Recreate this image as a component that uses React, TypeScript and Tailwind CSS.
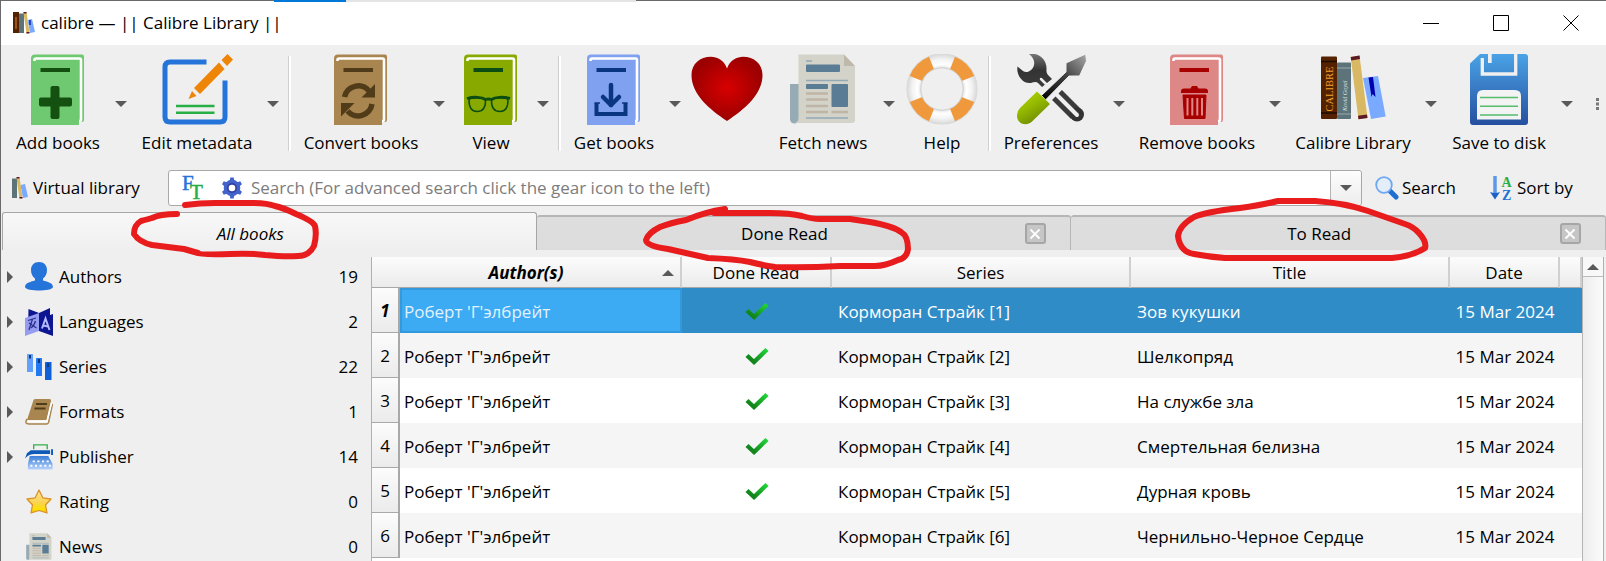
import React from "react";

type IconProps = { className?: string };

function Book({ cover, ink, children }: { cover: string; ink: string; children: React.ReactNode }) {
  return (
    <svg viewBox="0 0 54 72" className="h-[72px] w-[54px]" aria-hidden="true">
      <path d="M4 0.5H51a2 2 0 0 1 2 2V66a2 2 0 0 1-2 2H48V71H0V4.500a4 4 0 0 1 4-4Z" fill={cover} />
      <path d="M3.500 7.500V6q0-1.500 1.500-1.500H48.500q1.500 0 1.500 1.500V66q0 1-2 1" fill="none" stroke="#fff" strokeWidth="2.600" />
      <path d="M2 7H45.500a2 2 0 0 1 2 2V71H2Z" fill={cover} />
      <rect x="9.500" y="14" width="29.500" height="4" fill={ink} />
      {children}
    </svg>
  );
}

const AddIcon = () => (
  <Book cover="#6fc971" ink="#14500f">
    <path d="M19.500 34a2 2 0 0 1 2-2h5a2 2 0 0 1 2 2v9.500H39a2 2 0 0 1 2 2v5a2 2 0 0 1-2 2H28.500V63a2 2 0 0 1-2 2h-5a2 2 0 0 1-2-2V52.500H10a2 2 0 0 1-2-2v-5a2 2 0 0 1 2-2h9.500Z" fill="#14500f" />
  </Book>
);

const ConvertIcon = () => (
  <Book cover="#a9854f" ink="#503c18">
    <path d="M10.500 43A14 14 0 0 1 35 37" fill="none" stroke="#503c18" strokeWidth="5.500" />
    <path d="M41 30V43.500H27.500Z" fill="#503c18" />
    <path d="M38 50A14 14 0 0 1 13.500 57" fill="none" stroke="#503c18" strokeWidth="5.500" />
    <path d="M7 62.500V49H20.500Z" fill="#503c18" />
  </Book>
);

const ViewIcon = () => (
  <Book cover="#88aa00" ink="#0b4d12">
    <g fill="none" stroke="#0b4d12" strokeWidth="1.500">
      <path d="M5 46C5 43 21 43 21.500 47C21.500 53 19 57.500 13 57.500C6.500 57.500 5 52 5 46Z" />
      <path d="M44 46C44 43 28 43 27.500 47C27.500 53 30 57.500 36 57.500C42.500 57.500 44 52 44 46Z" />
      <path d="M3 44.500C10 42.500 18 43 21.500 45.500Q24.500 44.500 27.500 45.500C31 43 39 42.500 46 44.500" strokeWidth="2.800" />
    </g>
  </Book>
);

const GetIcon = () => (
  <Book cover="#80a0f0" ink="#0a3580">
    <g fill="none" stroke="#0a3580" strokeWidth="4.500">
      <path d="M24 31V51" strokeLinecap="round" />
      <path d="M16 43L24 51L32 43" strokeLinecap="round" strokeLinejoin="round" />
      <path d="M9.500 49V60H38.500V49" strokeWidth="4" />
      <path d="M7.500 49H13M35 49H40.500" strokeWidth="1.500" />
    </g>
  </Book>
);

const RemoveIcon = () => (
  <Book cover="#de8787" ink="#a80000">
    <path d="M11 39V37.500q0-3 3-3H20.500l1.500-2.500h5l1.500 2.500H35q3 0 3 3V39Z" fill="#a80000" />
    <path d="M13 41H36L35 64.500H14.500Z" fill="#a80000" stroke="#a80000" strokeWidth="1" strokeLinejoin="round" />
    <path d="M17.500 44V61.500M22.300 44V61.500M27.300 44V61.500M32 44V61.500" stroke="#de8787" strokeWidth="2" />
  </Book>
);

const EditIcon = () => (
  <svg viewBox="0 0 72 72" className="size-[72px]" aria-hidden="true">
    <path d="M45.500 8H9q-5 0-5 5V63q0 5 5 5H59q5 0 5-5V26.500" fill="none" stroke="#2574da" strokeWidth="5" />
    <path d="M15 52H53.500M15 58.700H53.500" stroke="#27ae44" strokeWidth="2.400" />
    <path d="M33 34L58 8.500L63.500 15L39 40ZM60.500 6L66.500 0L72 5.500L66 12ZM31 37L35.500 42L27.500 45Z" fill="#ee8506" />
  </svg>
);

const HeartIcon = () => (
  <svg viewBox="0 0 72 72" className="size-[72px]" aria-hidden="true">
    <defs>
      <radialGradient id="heart" cx="50%" cy="48%" r="50%">
        <stop offset="0" stopColor="#d80000" />
        <stop offset="1" stopColor="#9c0000" />
      </radialGradient>
    </defs>
    <path d="M36 14.500C39 6 46 2.800 52 2.800C63 2.800 71.500 10 71.500 21C71.500 40 54 55 36 67C18 55 .5 40 .5 21C.5 10 9 2.800 20 2.800C26 2.800 33 6 36 14.500Z" fill="url(#heart)" />
  </svg>
);

const NewsIcon = ({ className = "size-[72px]" }: IconProps) => (
  <svg viewBox="0 0 72 72" className={className} aria-hidden="true">
    <path d="M3 30H12V65a4.500 4.500 0 0 1-9 0Z" fill="#97abb5" />
    <path d="M11.500 .5H57L68 12V66q0 3-3 3H8q3.500-1 3.500-5Z" fill="#d3d3c9" />
    <path d="M57 .5L68 12H57Z" fill="#bfb9ac" />
    <g fill="#5a7c94">
      <rect x="19" y="10.500" width="34" height="7.500" rx="1" />
      <rect x="19" y="30" width="22" height="5" rx="1" />
      <rect x="44.500" y="30" width="16.500" height="23" rx="1" />
    </g>
    <path d="M19 7H25M19 26.500H61M19 64H61" stroke="#93a9b6" strokeWidth="1.600" />
    <path d="M19 39.500H41M19 45.500H41M19 52H41M19 58H41M44.500 58H61" stroke="#bfb5a6" strokeWidth="2.400" />
  </svg>
);

const HelpIcon = () => (
  <svg viewBox="0 0 72 72" className="size-[72px]" aria-hidden="true">
    <defs>
      <radialGradient id="ring" gradientUnits="userSpaceOnUse" cx="36" cy="35" r="36">
        <stop offset=".58" stopColor="#e2e2e2" />
        <stop offset=".68" stopColor="#fff" />
        <stop offset=".82" stopColor="#f4f4f4" />
        <stop offset="1" stopColor="#d4d4d4" />
      </radialGradient>
    </defs>
    <circle cx="36" cy="35" r="28.300" fill="none" stroke="url(#ring)" strokeWidth="14.500" />
    <circle cx="36" cy="35" r="28" fill="none" stroke="#f0993c" strokeWidth="13.500" pathLength="360" strokeDasharray="46 44" transform="rotate(22 36 35)" />
    <circle cx="36" cy="35" r="21.200" fill="none" stroke="#cfcfcf" strokeWidth="1" />
  </svg>
);

const ToolsIcon = () => (
  <svg viewBox="0 0 72 72" className="size-[72px]" aria-hidden="true">
    <defs>
      <linearGradient id="steel" x1="0" y1="0" x2="0" y2="1">
        <stop offset="0" stopColor="#777" />
        <stop offset=".5" stopColor="#333" />
        <stop offset="1" stopColor="#3c3c3c" />
      </linearGradient>
      <linearGradient id="blade" x1="1" y1="0" x2="0" y2="1">
        <stop offset="0" stopColor="#aaa" />
        <stop offset=".45" stopColor="#444" />
        <stop offset="1" stopColor="#000" />
      </linearGradient>
      <linearGradient id="grip" x1="0" y1="0" x2=".6" y2="1">
        <stop offset="0" stopColor="#b5dc00" />
        <stop offset=".5" stopColor="#95ba00" />
        <stop offset="1" stopColor="#6c8600" />
      </linearGradient>
    </defs>
    <path d="M14 0C25-2 32 7 31.500 15Q31 19 33 21L37 25L27 33L23 29Q21 27 16 29C7 30 1 20 2.500 12.500L8 17C12 20 18 16 19 11C20 7 18 3 14 0Z" fill="url(#steel)" />
    <path d="M34 33L26 25" stroke="#efefef" strokeWidth="2.500" strokeLinecap="round" />
    <path d="M42 41L61 60" stroke="#3b3b3b" strokeWidth="14" />
    <circle cx="62" cy="60.500" r="7" fill="#333" />
    <path d="M38 37L62 61" stroke="#efefef" strokeWidth="4" strokeLinecap="round" />
    <path d="M70.700 0L71.500 7L64.500 22H54L30.500 46L26.500 41.500L51 18V9Z" fill="url(#blade)" stroke="#efefef" strokeWidth="1" />
    <path d="M22 37.500L35 50L17 67.500C11 73 1.500 69.500 2 61Q2 57 5 54Z" fill="url(#grip)" />
  </svg>
);

const LibraryIcon = () => (
  <svg viewBox="0 0 72 72" className="size-[72px]" aria-hidden="true">
    <rect x="4" y="2.500" width="16" height="62.500" rx="1" fill="#542200" />
    <path d="M4 7.500H20M4 59H20" stroke="#1e0c00" strokeWidth="1.500" />
    <text x="15.500" y="57.500" transform="rotate(-90 15.500 57.500)" fill="#f0a030" fontSize="10.500" fontFamily="Liberation Serif, serif">CALIBRE</text>
    <rect x="20" y="8.500" width="14" height="56.500" rx="1" fill="#5c7479" />
    <path d="M20 14H34M20 60H34" stroke="#a8b8bb" strokeWidth=".8" />
    <text x="29.500" y="57" transform="rotate(-90 29.500 57)" fill="#dfe7e8" fontSize="6" fontStyle="italic" fontFamily="Liberation Serif, serif">Kovid Goyal</text>
    <path d="M46 24L61 22L68.700 62.500L54 65Z" fill="#79aaff" />
    <path d="M51.500 23.500L56 23L58.500 43L55.500 40L54.500 43Z" fill="#0000b0" />
    <path d="M33.700 3L42.500 1.500L50.500 64L41.500 65.200Z" fill="#d8b863" />
    <path d="M33.700 3L42.500 1.500L43 5L34.200 6.500ZM41 61.700L50 60.500L50.500 64L41.500 65.200Z" fill="#5c1826" />
  </svg>
);

const SaveIcon = () => (
  <svg viewBox="0 0 72 72" className="size-[72px]" aria-hidden="true">
    <defs>
      <linearGradient id="disk" x1="0" y1="0" x2="0" y2="1">
        <stop offset="0" stopColor="#4aa3e6" />
        <stop offset="1" stopColor="#254f9e" />
      </linearGradient>
    </defs>
    <path d="M17 0H62q3 0 3 3V68q0 3-3 3H10q-3 0-3-3V9.500Z" fill="url(#disk)" />
    <path d="M19.300 4V20H52.700V0" fill="none" stroke="#f0f0f0" strokeWidth="3.300" />
    <path d="M25 0H28.700V9H25Z" fill="#f0f0f0" />
    <path d="M14 65.500V42q0-6 6-6H52q6 0 6 6V65.500Z" fill="#f3f3f3" />
    <path d="M17 43.500H55M17 52.200H55M17 61H55" stroke="#55bd6c" strokeWidth="1.600" />
  </svg>
);

const SmallBooks = ({ className, full = false }: IconProps & { full?: boolean }) => (
  <svg viewBox={full ? "0 0 22 22" : "6 0 16 22"} className={className} aria-hidden="true">
    {full && <rect x="0" y="0" width="6" height="21" fill="#542200" />}
    {full && <path d="M3 5V17" stroke="#b06820" strokeWidth="1.500" />}
    <rect x="6" y="1.500" width="5" height="19.500" fill="#5c7479" />
    <path d="M14.500 8L19 7L22 20L17 21Z" fill="#79aaff" />
    {full && <path d="M17 8V13" stroke="#1020b0" strokeWidth="1.500" />}
    <path d="M10.500 .5L13.500 0L16.500 21L13.500 21.500Z" fill="#d8b863" />
    <path d="M10.500 0h3v1.500h-3ZM13.500 20h3v1.500h-3Z" fill="#5c1826" />
  </svg>
);

const Triangle = ({ dir }: { dir: "down" | "up" | "right" }) => (
  <svg viewBox="0 0 12 12" className="size-3 shrink-0" fill="#595959" aria-hidden="true">
    {dir === "down" && <path d="M0 3H12L6 9Z" />}
    {dir === "up" && <path d="M0 9H12L6 3Z" />}
    {dir === "right" && <path d="M3 0V12L9 6Z" />}
  </svg>
);

const tools: { label: string; icon: React.ReactNode; width: string; menu: boolean; sep?: boolean }[] = [
  { label: "Add books", icon: <AddIcon />, width: "w-[104px]", menu: true },
  { label: "Edit metadata", icon: <EditIcon />, width: "w-[130px]", menu: true, sep: true },
  { label: "Convert books", icon: <ConvertIcon />, width: "w-[134px]", menu: true },
  { label: "View", icon: <ViewIcon />, width: "w-[82px]", menu: true, sep: true },
  { label: "Get books", icon: <GetIcon />, width: "w-[100px]", menu: true },
  { label: "", icon: <HeartIcon />, width: "w-[82px]", menu: false },
  { label: "Fetch news", icon: <NewsIcon />, width: "w-[110px]", menu: true },
  { label: "Help", icon: <HelpIcon />, width: "w-[84px]", menu: false, sep: true },
  { label: "Preferences", icon: <ToolsIcon />, width: "w-[114px]", menu: true },
  { label: "Remove books", icon: <RemoveIcon />, width: "w-[134px]", menu: true },
  { label: "Calibre Library", icon: <LibraryIcon />, width: "w-[134px]", menu: true },
  { label: "Save to disk", icon: <SaveIcon />, width: "w-[114px]", menu: true },
];

const categories: { label: string; count: number; open: boolean; icon: React.ReactNode }[] = [
  {
    label: "Authors", count: 19, open: true,
    icon: <svg viewBox="0 0 28 29" className="h-[29px] w-7" aria-hidden="true"><path d="M14 0C19 0 22 3.500 22 8C22 12 20.500 14.500 18 16.500V18.500C23 20 28 21 28 25C28 27.500 20 28.500 14 28.500C8 28.500 0 27.500 0 25C0 21 5 20 10 18.500V16.500C7.500 14.500 6 12 6 8C6 3.500 9 0 14 0Z" fill="#2574da" /></svg>,
  },
  {
    label: "Languages", count: 2, open: true,
    icon: (
      <svg viewBox="0 0 28 28" className="size-7" aria-hidden="true">
        <path d="M3.500 1L14 5L25 0V7L28 6V28L14 23L3 20Z" fill="#0d1690" />
        <path d="M0 10L14 5V23L0 28Z" fill="#969cf0" />
        <path d="M3 12.500L11 10M7.500 11L4 22M4 15L11.500 20M10.500 13Q9 18 6 20" stroke="#2a3090" strokeWidth="1.300" fill="none" />
        <path d="M17 20.500L20.500 10.500L24.500 22M18.200 17.500L23 18.500" stroke="#b4b8ff" strokeWidth="2" fill="none" />
      </svg>
    ),
  },
  {
    label: "Series", count: 22, open: true,
    icon: (
      <svg viewBox="0 0 28 28" className="size-7" aria-hidden="true">
        <rect x="2" y="1" width="6" height="18" rx=".5" fill="#63a0fa" />
        <rect x="11" y="5" width="6" height="18" rx=".5" fill="#2277f3" />
        <rect x="20" y="9" width="6.500" height="18" rx=".5" fill="#0f5fd7" />
        <path d="M5 2V5.500M14 6V10M23 10.500V14" stroke="#123a78" strokeWidth="2" />
      </svg>
    ),
  },
  {
    label: "Formats", count: 1, open: true,
    icon: (
      <svg viewBox="0 0 28 28" className="size-7" aria-hidden="true">
        <path d="M8.500 2Q9 1 10.500 1H24Q26.500 1 26 3L21.500 22H2Z" fill="#a9854f" />
        <path d="M2 21Q-1 26 4 26H21.500Q23 26 23.500 24.500L27.500 6" fill="none" stroke="#a9854f" strokeWidth="1.500" />
        <path d="M3 23.500H22L26.500 5" fill="none" stroke="#fff" strokeWidth="1.500" />
        <path d="M11 6H22M9.500 10.500H20.500" stroke="#503c18" strokeWidth="2.200" />
      </svg>
    ),
  },
  {
    label: "Publisher", count: 14, open: true,
    icon: (
      <svg viewBox="0 0 29 28" className="h-7 w-[29px]" aria-hidden="true">
        <defs><linearGradient id="keys" x1="0" y1="0" x2="0" y2="1"><stop offset="0" stopColor="#3c7ed8" /><stop offset="1" stopColor="#b6d4fc" /></linearGradient></defs>
        <path d="M9 6V1.500H23V6" fill="none" stroke="#34b14a" strokeWidth="1.400" />
        <path d="M6 7H26V11H10Q4 11 0 15.500L2 10ZM27 6H29V12H27Z" fill="#0f5ab8" />
        <path d="M5 13H24L28.500 21V27H3V21Z" fill="url(#keys)" />
        <path d="M8 18.500H26M5.500 23H28" stroke="#fff" strokeWidth="2" strokeDasharray="2.200 2.600" />
      </svg>
    ),
  },
  {
    label: "Rating", count: 0, open: false,
    icon: (
      <svg viewBox="0 0 28 28" className="size-7" aria-hidden="true">
        <defs><linearGradient id="star" x1="0" y1="0" x2="0" y2="1"><stop offset="0" stopColor="#fbe39a" /><stop offset=".55" stopColor="#fbd350" /><stop offset=".85" stopColor="#fbe100" /><stop offset="1" stopColor="#f3ab20" /></linearGradient></defs>
        <path d="M14 2L17.800 9.800L26 11L20.500 17L22 25L14 22.500L6 25L7.500 17L2 11L10.200 9.800Z" fill="url(#star)" stroke="#d9922c" strokeWidth="1.300" strokeLinejoin="round" />
      </svg>
    ),
  },
  { label: "News", count: 0, open: false, icon: <NewsIcon className="size-7" /> },
];

const books = [
  { title: "Зов кукушки", read: true },
  { title: "Шелкопряд", read: true },
  { title: "На службе зла", read: true },
  { title: "Смертельная белизна", read: true },
  { title: "Дурная кровь", read: true },
  { title: "Чернильно-Черное Сердце", read: false },
];

const Check = () => (
  <svg viewBox="0 0 24 20" className="mx-auto h-5 w-6" role="img" aria-label="Yes">
    <defs><linearGradient id="tick" x1="0" y1="1" x2="1" y2="0"><stop offset=".2" stopColor="#12851c" /><stop offset="1" stopColor="#20d838" /></linearGradient></defs>
    <path d="M2 8.500L9 15L22 2.500" fill="none" stroke="url(#tick)" strokeWidth="4.400" />
  </svg>
);

function TabClose({ name }: { name: string }) {
  return (
    <button aria-label={`Close ${name}`} className="flex size-[21px] items-center justify-center rounded-[3px] border-2 border-[#a6a6a6] bg-[#c6c6c6]">
      <svg viewBox="0 0 12 12" className="size-3" aria-hidden="true"><path d="M1.500 1.500L10.500 10.500M10.500 1.500L1.500 10.500" stroke="#fff" strokeWidth="1.800" /></svg>
    </button>
  );
}

const headCell = "h-[31px] border-r-2 border-b border-r-[#d0d0d0] border-b-[#a8a8a8] bg-linear-to-b from-[#fcfcfc] to-[#ebebeb] p-0 pt-0.5 text-center font-normal";

export default function App() {
  return (
    <div className="relative flex h-screen flex-col overflow-hidden border-l border-[#6b696b] bg-[#efefef] font-['Open_Sans','Noto_Sans',sans-serif] text-[17px] leading-6 text-black">
      <header className="flex h-[45px] shrink-0 items-center border-t border-[#6b696b] bg-white pl-3">
        <SmallBooks full className="size-[22px]" />
        <h1 className="ml-1.5 flex-1">calibre — || Calibre Library ||</h1>
        <button aria-label="Minimize" className="flex h-full w-[70px] items-center justify-center">
          <svg viewBox="0 0 16 16" className="size-4" aria-hidden="true"><path d="M0 8.500H16" stroke="#000" /></svg>
        </button>
        <button aria-label="Maximize" className="flex h-full w-[70px] items-center justify-center">
          <svg viewBox="0 0 16 16" className="size-4" aria-hidden="true"><path d="M.5 .5H15.500V15.500H.5Z" fill="none" stroke="#000" /></svg>
        </button>
        <button aria-label="Close" className="flex h-full w-[70px] items-center justify-center">
          <svg viewBox="0 0 16 16" className="size-4" aria-hidden="true"><path d="M.5 .5L15.500 15.500M15.500 .5L.5 15.500" stroke="#000" /></svg>
        </button>
      </header>

      <div role="toolbar" aria-label="Main" className="flex h-[120px] shrink-0 items-start pt-[9px] pl-[5px]">
        {tools.map((t, i) => (
          <React.Fragment key={i}>
            <button aria-label={t.label || "Donate"} className={`flex shrink-0 flex-col items-center whitespace-nowrap ${t.width}`}>
              {t.icon}
              <span className="mt-[5px]">{t.label}</span>
            </button>
            {t.menu && (
              <button aria-label={`${t.label} menu`} className="flex h-[100px] w-[22px] shrink-0 items-center justify-center">
                <Triangle dir="down" />
              </button>
            )}
            {t.sep && (
              <div className="flex w-2.5 shrink-0 justify-center pt-0.5">
                <div className="h-[95px] w-[3px] border-l border-[#cfcfcf] bg-white" />
              </div>
            )}
          </React.Fragment>
        ))}
        <button aria-label="More tools" className="ml-auto flex h-[100px] w-[18px] items-center justify-center">
          <svg viewBox="0 0 3 12" className="h-3 w-[3px]" fill="#777" aria-hidden="true"><path d="M0 0h3v3H0ZM0 4.500h3v3H0ZM0 9h3v3H0Z" /></svg>
        </button>
      </div>

      <div className="flex h-[47px] shrink-0 items-center pb-0.5">
        <button className="flex w-[167px] shrink-0 items-center pl-[11px]">
          <SmallBooks className="h-[22px] w-4" />
          <span className="ml-[5px]">Virtual library</span>
        </button>
        <div className="flex h-9 min-w-0 flex-1 items-center rounded-[3px] border border-[#a8a8a8] bg-white">
          <button aria-label="Full text search" className="ml-3 shrink-0">
            <svg viewBox="0 0 24 26" className="h-[26px] w-6 overflow-visible" fontFamily="Liberation Serif, serif" fontSize="21" aria-hidden="true">
              <text x="1" y="15" fill="#2574da" stroke="#2574da" strokeWidth=".5">F</text>
              <text x="9" y="23.500" fill="#27ae44" stroke="#27ae44" strokeWidth=".5">T</text>
            </svg>
          </button>
          <button aria-label="Advanced search" className="ml-4 shrink-0">
            <svg viewBox="0 0 22 22" className="size-[22px]" aria-hidden="true">
              <g fill="#4263cc">
                <circle cx="11" cy="11" r="8.300" />
                <path id="cog" d="M8.500 5L9.300 .5H12.700L13.500 5V17L12.700 21.500H9.300L8.500 17Z" />
                <use href="#cog" transform="rotate(60 11 11)" />
                <use href="#cog" transform="rotate(120 11 11)" />
              </g>
              <circle cx="11" cy="11" r="5" fill="#343f9f" />
              <circle cx="11" cy="11" r="3.300" fill="#fff" />
            </svg>
          </button>
          <input aria-label="Search books" placeholder="Search (For advanced search click the gear icon to the left)" className="ml-2 h-full min-w-0 flex-1 bg-transparent outline-none placeholder:text-[#7c7c7c]" />
          <button aria-label="Search history" className="flex h-full w-[31px] items-center justify-center rounded-r-[3px] border-l border-[#b4b4b4] bg-linear-to-b from-[#fdfdfd] to-[#ededed]">
            <Triangle dir="down" />
          </button>
        </div>
        <button className="ml-[13px] flex w-[115px] shrink-0 items-center">
          <svg viewBox="0 0 24 24" className="size-6" aria-hidden="true">
            <path d="M14.500 14.500L21 21" stroke="#2070d4" strokeWidth="5" strokeLinecap="round" />
            <circle cx="9" cy="9" r="7.800" fill="#e4eefb" stroke="#70a8f0" strokeWidth="1.800" />
          </svg>
          <span className="ml-[3px]">Search</span>
        </button>
        <button className="flex w-[116px] shrink-0 items-center">
          <svg viewBox="0 0 22 26" className="h-[26px] w-[22px] overflow-visible" fontFamily="Liberation Serif, serif" fontSize="14" fontWeight="bold" aria-hidden="true">
            <path d="M5 1V20" stroke="#5a98ea" strokeWidth="3.500" />
            <path d="M0 17Q5 19 10 17L5 24.500Z" fill="#1a62c8" />
            <text x="11.500" y="11.500" fill="#27ae44">A</text>
            <text x="12" y="24.500" fill="#2070d4">Z</text>
          </svg>
          <span className="ml-[5px]">Sort by</span>
        </button>
      </div>

      <div role="tablist" className="grid h-[38px] shrink-0 grid-cols-3 items-end pl-px">
        <button role="tab" aria-selected="true" className="h-full rounded-t-[3px] border border-b-0 border-[#a6a6a6] bg-linear-to-b from-[#f8f8f8] to-[#efefef] pt-1 pr-[38px] italic">All books</button>
        {["Done Read", "To Read"].map((name) => (
          <div key={name} className="flex h-[35px] items-center rounded-t-[3px] border-t-2 border-r border-[#b6b6b6] bg-linear-to-b from-[#dedede] to-[#dcdcdc]">
            <button role="tab" aria-selected="false" className="ml-8 h-full flex-1">{name}</button>
            <div className="flex w-[70px] justify-center"><TabClose name={name} /></div>
          </div>
        ))}
      </div>

      <main className="flex min-h-0 flex-1">
        <nav aria-label="Categories" className="w-[370px] shrink-0 pt-1">
          <ul>
            {categories.map((c) => (
              <li key={c.label}>
                <a href="#" className="flex h-[45px] items-center pr-[13px] pl-0.5">
                  <span className="flex w-[22px] pl-px">{c.open && <Triangle dir="right" />}</span>
                  <span className="flex w-7">{c.icon}</span>
                  <span className="ml-1.5 flex-1">{c.label}</span>
                  <span>{c.count}</span>
                </a>
              </li>
            ))}
          </ul>
        </nav>

        <section className="mt-[7px] mr-0.5 flex min-w-0 flex-1 items-stretch overflow-hidden border-x border-[#b0b0b0] bg-white">
          <div className="min-w-0 flex-1">
            <table className="w-full table-fixed border-separate border-spacing-0 whitespace-nowrap">
              <colgroup>
                <col className="w-[28px]" />
                <col className="w-[282px]" />
                <col className="w-[150px]" />
                <col className="w-[299px]" />
                <col />
                <col className="w-[110px]" />
                <col className="w-[22px]" />
              </colgroup>
              <thead>
                <tr>
                  <th colSpan={2} scope="col" aria-sort="ascending" className={headCell}>
                    <span className="flex items-center justify-between pr-1.5 pl-[18px] font-bold italic">
                      <span className="flex-1">Author(s)</span>
                      <Triangle dir="up" />
                    </span>
                  </th>
                  <th scope="col" className={headCell}>Done Read</th>
                  <th scope="col" className={headCell}>Series</th>
                  <th scope="col" className={headCell}>Title</th>
                  <th scope="col" className={headCell}>Date</th>
                  <td className={headCell} />
                </tr>
              </thead>
              <tbody>
                {books.map((b, i) => (
                  <tr key={b.title} className={i === 0 ? "bg-[#308cc6] text-white" : i % 2 ? "bg-[#f5f5f5]" : "bg-white"}>
                    <th scope="row" className={`h-[45px] border-r-2 border-b border-[#a8a8a8] bg-linear-to-b from-[#fcfcfc] to-[#ebebeb] p-0 pt-0.5 text-center text-black ${i === 0 ? "font-bold italic" : "font-normal"}`}>{i + 1}</th>
                    <td className={i === 0 ? "border-2 border-[#3498dd] bg-[#3daaf4] p-0 pt-0.5 pl-0.5 text-[#e2f2fd]" : "p-0 pt-0.5 pl-1"}>Роберт 'Г'элбрейт</td>
                    <td className="p-0 pt-0.5">{b.read && <Check />}</td>
                    <td className="p-0 pt-0.5 pl-1.5">Корморан Страйк [{i + 1}]</td>
                    <td className="p-0 pt-0.5 pl-1.5">{b.title}</td>
                    <td className="p-0 pt-0.5 text-center">15 Mar 2024</td>
                    <td />
                  </tr>
                ))}
              </tbody>
            </table>
          </div>
          <div className="w-[21px] shrink-0 border-l border-[#b4b4b4] bg-linear-to-r from-[#ededed] to-[#fbfbfb]">
            <button aria-label="Scroll up" className="flex h-5 w-full items-center justify-center border-b border-[#bcbcbc] bg-[#f8f8f8]">
              <Triangle dir="up" />
            </button>
          </div>
        </section>
      </main>

      <div className="absolute top-0 left-[273px] flex h-0.5 w-[362px] bg-[#e4e4e4]">
        <div className="w-[72px] bg-[#0078d7]" />
      </div>

      <svg viewBox="0 0 1606 561" className="pointer-events-none absolute top-0 -left-px h-[561px] w-[1606px] max-w-none" fill="none" stroke="#e81c1c" strokeWidth="6" strokeLinecap="round" strokeLinejoin="round" aria-hidden="true">
        <path d="M185 205Q200 203 215 203H250Q267 203 275 206Q284 208 296 214Q313 221 315 226Q317 235 314 246Q309 256 298 256Q285 257 265 255Q250 253 230 254Q200 255 198 253L184 249L152 245Q139 242 134 234Q134 225 141 221Q149 219 152 218Q160 214 177 214" />
        <path d="M725 209L714 213H770Q790 213 802 216Q812 219 820 219H850L870 222Q893 226 901 232Q908 236 908 249Q907 258 898 260Q885 266 875 266H840Q805 268 775 267Q762 265 750 262Q735 259 708 258L668 249Q646 246 646 240Q648 233 660 227Q670 223 686 220Q705 212 725 209" />
        <path d="M1315 201H1278Q1262 205 1240 208Q1205 212 1194 217Q1179 226 1178 236Q1180 252 1194 254Q1210 257 1225 258H1392Q1413 256 1425 248Q1427 242 1419 233Q1414 227 1405 224L1368 211Q1345 203 1315 201" />
      </svg>
    </div>
  );
}
